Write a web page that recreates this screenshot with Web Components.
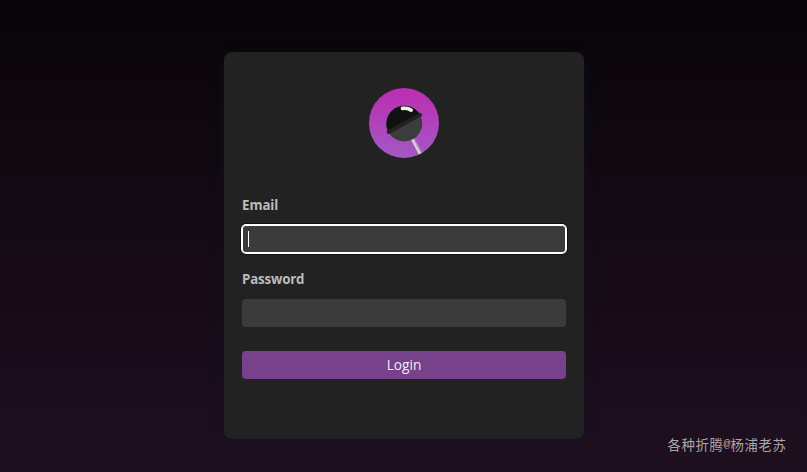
<!DOCTYPE html>
<html lang="en">
<head>
<meta charset="utf-8">
<title>Login</title>
<style>
html, body { margin: 0; height: 100%; }
body { font-family: "Open Sans", "Noto Sans", "Noto Sans CJK SC", sans-serif; overflow: hidden; }
</style>
</head>
<body>
<login-page></login-page>
<script>
class BaseElement extends HTMLElement {
  connectedCallback() {
    if (this.shadowRoot) return;
    this.attachShadow({ mode: "open" }).innerHTML = this.render();
  }
}

customElements.define("lollipop-logo", class extends BaseElement {
  render() {
    return `<style>
      :host { display: block; width: 70px; height: 70px; }
      svg { display: block; }
    </style>
    <svg width="70" height="70" viewBox="0 0 70 70" aria-hidden="true">
      <defs>
        <linearGradient id="disc" x1="0" y1="0" x2="0" y2="1"><stop offset="0" stop-color="#bd2cb2"/><stop offset="1" stop-color="#a259c4"/></linearGradient>
        <clipPath id="clip"><circle cx="35" cy="35" r="35"/></clipPath>
      </defs>
      <circle cx="35" cy="35" r="35" fill="url(#disc)"/>
      <g clip-path="url(#clip)">
        <path d="M43.6 51 L52 66.8" stroke="#b4afb6" stroke-width="3.6"/>
        <path d="M43 51.3 L51.4 67.1" stroke="#dad7db" stroke-width="1.8"/>
      </g>
      <circle cx="35.2" cy="35.4" r="18" fill="#3c3c3c"/>
      <path d="M19.3 43.8 A18 18 0 0 1 51 26.8 Z" fill="#111"/>
      <path d="M19.6 44 L51.2 26.9" stroke="#222" stroke-width="3.8" stroke-linecap="round"/>
      <path d="M33.5 20.4 Q38.8 19.6 42.2 22.2" fill="none" stroke="#eee" stroke-width="3.6" stroke-linecap="round"/>
    </svg>`;
  }
});

customElements.define("login-field", class extends BaseElement {
  render() {
    const focused = this.hasAttribute("focused");
    return `<style>
      :host { display: block; height: 58px; }
      .label { display: block; box-sizing: border-box; height: 19px; padding: 1px 0 0 .6px; margin-bottom: 11px; font-size: 13.3px; font-weight: 700; line-height: 18px; color: #bbb; white-space: nowrap; letter-spacing: var(--label-spacing, 0); }
      .input { display: flex; align-items: center; box-sizing: border-box; height: 28px; padding-left: 6px; border-radius: 4px; background: #3b3b3b; }
      .input.focus { box-shadow: inset 0 0 0 1px #fff, 0 0 0 1px #fff, 0 0 0 2px #101010; }
      .caret { width: 1px; height: 16px; background: #fff; }
    </style>
    <span class="label"><slot></slot></span>
    <div class="input${focused ? " focus" : ""}" role="textbox">${focused ? '<span class="caret"></span>' : ""}</div>`;
  }
});

customElements.define("login-button", class extends BaseElement {
  render() {
    return `<style>
      :host { display: block; }
      button { display: block; width: 100%; height: 28px; padding: 0 0 0 1px; border: 0; border-radius: 4px; background: #78418c; color: #eee; font: 400 13.7px/28px "Open Sans", "Noto Sans", sans-serif; }
    </style><button type="button"><slot></slot></button>`;
  }
});

customElements.define("login-card", class extends BaseElement {
  render() {
    return `<style>
      :host { display: flex; flex-direction: column; box-sizing: border-box; width: 360px; height: 387px; padding: 36px 18px; border-radius: 8px; background: #222; box-shadow: 0 3px 12px rgba(18,20,46,.45); }
      lollipop-logo { align-self: center; margin-bottom: 37px; }
      ::slotted(login-field) { margin-bottom: 16px; }
      ::slotted(login-button) { margin-top: 8px; }
    </style><lollipop-logo></lollipop-logo><slot></slot>`;
  }
});

customElements.define("page-watermark", class extends BaseElement {
  render() {
    return `<style>
      :host { display: flex; align-items: center; height: 20px; font: 13.4px/20px "Noto Sans CJK SC", sans-serif; letter-spacing: .6px; color: #aaa6aa; white-space: nowrap; }
      .at { display: inline-block; width: 7px; font: 11.66px/20px "Liberation Mono", monospace; letter-spacing: 0; }
    </style><span>各种折腾</span><span class="at">@</span><span>杨浦老苏</span>`;
  }
});

customElements.define("login-page", class extends BaseElement {
  render() {
    return `<style>
      :host { display: grid; box-sizing: border-box; width: 100%; height: 472px; padding: 52px 20.5px 18px; grid-template-columns: 1fr 360px 1fr; grid-template-rows: 402px; background: linear-gradient(#090409, #100910 30%, #170b18 63%, #1f1020); }
      login-card { grid-column: 2; }
      page-watermark { grid-column: 3; align-self: end; justify-self: end; }
    </style>
    <login-card>
      <login-field focused style="--label-spacing:-.1px">Email</login-field>
      <login-field style="--label-spacing:-.18px">Password</login-field>
      <login-button>Login</login-button>
    </login-card>
    <page-watermark></page-watermark>`;
  }
});
</script>
</body>
</html>
